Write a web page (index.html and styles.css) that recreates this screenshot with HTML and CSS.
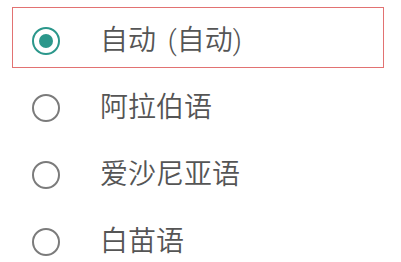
FILE: index.html
```html
<!DOCTYPE html>
<html lang="zh">
<head>
    <meta charset="UTF-8">
    <meta name="viewport" content="width=device-width, initial-scale=1.0">
    <title>语言</title>
    <link rel="stylesheet" href="styles.css">
</head>
<body>

<ul class="lang-list">
    <li class="lang-list__item lang-list__item--active">
        <span class="lang-list__radio lang-list__radio--checked"></span>
        <span class="lang-list__label">自动 (自动)</span>
    </li>
    <li class="lang-list__item">
        <span class="lang-list__radio"></span>
        <span class="lang-list__label">阿拉伯语</span>
    </li>
    <li class="lang-list__item">
        <span class="lang-list__radio"></span>
        <span class="lang-list__label">爱沙尼亚语</span>
    </li>
    <li class="lang-list__item">
        <span class="lang-list__radio"></span>
        <span class="lang-list__label">白苗语</span>
    </li>
</ul>

</body>
</html>
```

FILE: styles.css
```css
body {
    margin: 0;
    background: #fff;
    font-family: Roboto, "Noto Sans CJK SC", sans-serif;
}
.lang-list {
    list-style: none;
    margin: 0;
    padding: 7px 0 0;
    display: flex;
    flex-direction: column;
    gap: 6px;
}
.lang-list__item {
    box-sizing: border-box;
    display: flex;
    align-items: center;
    height: 61px;
    width: 372px;
    margin-left: 12px;
    padding: 6px 0 0 19px;
    border: 1.5px solid transparent;
}
.lang-list__item--active {
    border-color: #e27272;
}
.lang-list__radio {
    box-sizing: border-box;
    flex: none;
    width: 28px;
    height: 28px;
    border: 2.5px solid #7b7b7b;
    border-radius: 50%;
    display: flex;
    align-items: center;
    justify-content: center;
}
.lang-list__radio--checked {
    border-color: #2b978b;
}
.lang-list__radio--checked::after {
    content: "";
    width: 14px;
    height: 14px;
    border-radius: 50%;
    background: #2b978b;
}
.lang-list__label {
    margin-left: 40px;
    font-size: 28px;
    font-weight: 350;
    line-height: 1;
    word-spacing: 5px;
    color: #555;
}
```
